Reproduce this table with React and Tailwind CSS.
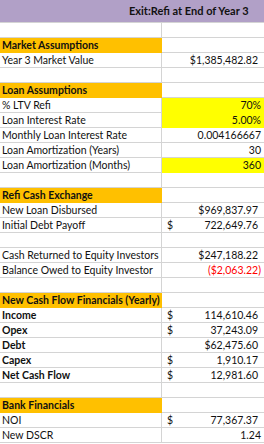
const ROWS = [
  {},
  { label: 'Market Assumptions', head: true },
  { label: 'Year 3 Market Value', value: '$1,385,482.82', pad: true },
  {},
  { label: 'Loan Assumptions', head: true },
  { label: '% LTV Refi', value: '70%', yellow: true },
  { label: 'Loan Interest Rate', value: '5.00%', yellow: true },
  { label: 'Monthly Loan Interest Rate', value: '0.004166667' },
  { label: 'Loan Amortization (Years)', value: '30' },
  { label: 'Loan Amortization (Months)', value: '360', yellow: true },
  {},
  { label: 'Refi Cash Exchange', head: true },
  { label: 'New Loan Disbursed', value: '$969,837.97', pad: true },
  { label: 'Initial Debt Payoff', dollar: true, value: '722,649.76', pad: true },
  {},
  { label: 'Cash Returned to Equity Investors', value: '$247,188.22', pad: true },
  { label: 'Balance Owed to Equity Investor', value: '($2,063.22)', red: true },
  {},
  { label: 'New Cash Flow Financials (Yearly)', head: true },
  { label: 'Income', bold: true, dollar: true, value: '114,610.46', pad: true },
  { label: 'Opex', bold: true, dollar: true, value: '37,243.09', pad: true },
  { label: 'Debt', bold: true, value: '$62,475.60', pad: true },
  { label: 'Capex', bold: true, dollar: true, value: '1,910.17', pad: true },
  { label: 'Net Cash Flow', bold: true, dollar: true, value: '12,981.60', pad: true },
  {},
  { label: 'Bank Financials', head: true },
  { label: 'NOI', dollar: true, value: '77,367.37', pad: true },
  { label: 'New DSCR', value: '1.24' },
];

function Row({ row }) {
  const labelCls = row.head
    ? 'bg-[#ffc000] border-[#ffc000] font-bold'
    : row.bold
      ? 'border-[#d4d4d4] font-bold'
      : 'border-[#d4d4d4]';
  const valueCls = row.yellow ? 'bg-[#ffff00] border-[#ffff00]' : 'border-[#d4d4d4]';

  return (
    <div className="flex h-[15px]">
      <div className={`w-[162px] shrink-0 overflow-hidden whitespace-nowrap border-b border-r pl-[2px] leading-[15px] ${labelCls}`}>
        {row.label}
      </div>
      <div className={`flex flex-1 justify-between border-b pl-[5px] leading-[15px] ${row.pad ? 'pr-[6px]' : 'pr-[3px]'} ${valueCls}`}>
        <span>{row.dollar ? '$' : ''}</span>
        <span className={row.red ? 'text-[#ff0000]' : ''}>{row.value}</span>
      </div>
    </div>
  );
}

export default function App() {
  return (
    <div className="h-[444px] w-[264px] overflow-hidden bg-white font-['Lato',sans-serif] text-[10.5px] text-[#111]">
      <div className="flex h-[23px] items-center border-b border-[#d4d4d4] bg-[#b1a0c7] pl-[129px] text-[11px] font-bold">
        Exit:Refi at End of Year 3
      </div>
      {ROWS.map((row, i) => (
        <Row key={i} row={row} />
      ))}
    </div>
  );
}
